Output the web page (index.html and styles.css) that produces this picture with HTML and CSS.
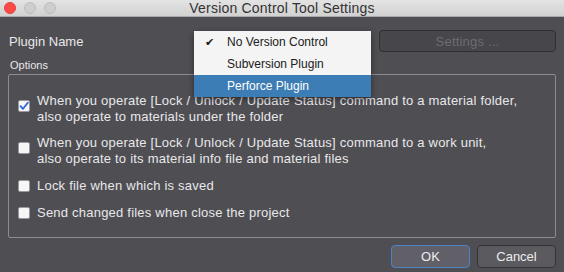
FILE: index.html
```html
<!DOCTYPE html>
<html lang="en">
<head>
    <meta charset="UTF-8">
    <title>Version Control Tool Settings</title>
    <link rel="stylesheet" href="styles.css">
</head>
<body>
    <div class="titlebar">
        <div class="lights">
            <span class="light close"></span>
            <span class="light"></span>
            <span class="light"></span>
        </div>
        <div class="title">Version Control Tool Settings</div>
    </div>
    <div class="main">
        <div class="plugin-row">
            <div class="plugin-label">Plugin Name</div>
            <button class="settings-btn" disabled>Settings ...</button>
        </div>
        <div class="options-label">Options</div>
        <div class="group">
            <div class="option multi">
                <span class="checkbox checked">
                    <svg width="10" height="10" viewBox="0 0 10 10"><path d="M1.5 5.2 L4 7.8 L8.8 1.8" fill="none" stroke="#2b62d8" stroke-width="1.8" stroke-linecap="round" stroke-linejoin="round"/></svg>
                </span>
                <div class="option-text">When you operate [Lock / Unlock / Update Status] command to a material folder,<br>also operate to materials under the folder</div>
            </div>
            <div class="option multi">
                <span class="checkbox"></span>
                <div class="option-text">When you operate [Lock / Unlock / Update Status] command to a work unit,<br>also operate to its material info file and material files</div>
            </div>
            <div class="option">
                <span class="checkbox"></span>
                <div class="option-text">Lock file when which is saved</div>
            </div>
            <div class="option">
                <span class="checkbox"></span>
                <div class="option-text">Send changed files when close the project</div>
            </div>
        </div>
        <div class="buttons">
            <button class="btn default">OK</button>
            <button class="btn">Cancel</button>
        </div>
    </div>
    <div class="menu">
        <div class="menu-item"><span class="tick">&#10004;</span>No Version Control</div>
        <div class="menu-item">Subversion Plugin</div>
        <div class="menu-item selected">Perforce Plugin</div>
    </div>
</body>
</html>
```

FILE: styles.css
```css
body {
    margin: 0;
    width: 564px;
    height: 272px;
    overflow: hidden;
    position: relative;
    background-color: #4f4e53;
    font-family: "Liberation Sans", Arial, sans-serif;
    font-size: 13px;
    color: #e8e8ea;
}
.titlebar {
    height: 16px;
    border-bottom: 1px solid #a9a8aa;
    background: linear-gradient(#e4e3e4, #d2d1d2);
    display: flex;
    align-items: center;
    position: relative;
}
.lights {
    display: flex;
    gap: 8px;
    padding-left: 4px;
    position: relative;
    z-index: 1;
}
.light {
    width: 12px;
    height: 12px;
    box-sizing: border-box;
    border-radius: 50%;
    background: #cfcecf;
    border: 1px solid #bdbcbd;
}
.light.close {
    background: #fc4a48;
    border-color: #e4403e;
}
.title {
    position: absolute;
    left: 0;
    right: 0;
    text-align: center;
    color: #333333;
    font-size: 14px;
    line-height: 16px;
    letter-spacing: 0.2px;
}
.main {
    padding: 13px 8px 0 8px;
}
.plugin-row {
    display: flex;
    align-items: center;
    height: 22px;
}
.plugin-label {
    padding-left: 1px;
}
.settings-btn {
    margin-left: auto;
    width: 177px;
    height: 22px;
    background: #47464a;
    border: 1px solid #2f2e32;
    border-radius: 4px;
    color: #6d6c71;
    font-family: inherit;
    font-size: 13px;
    letter-spacing: 0.2px;
}
.options-label {
    margin-top: 6px;
    padding-left: 2px;
    font-size: 11px;
    line-height: 14px;
}
.group {
    margin-top: 2px;
    height: 144px;
    border: 1px solid #8d8c90;
    border-radius: 2px;
    padding: 18px 0 0 9px;
}
.option {
    display: flex;
    align-items: flex-start;
    gap: 7px;
    line-height: 16px;
    margin-top: 11px;
    letter-spacing: 0.22px;
}
.option.multi + .option.multi {
    margin-top: 10px;
}
.option:first-child {
    margin-top: 0;
}
.checkbox {
    flex: none;
    width: 12px;
    height: 12px;
    margin-top: 2px;
    box-sizing: border-box;
    background: #f6f6f6;
    border: 1px solid #9a99a0;
    border-radius: 2px;
    display: flex;
    align-items: center;
    justify-content: center;
}
.option.multi .checkbox {
    margin-top: 7px;
}
.buttons {
    margin-top: 7px;
    display: flex;
    justify-content: flex-end;
    gap: 7px;
}
.btn {
    width: 79px;
    height: 23px;
    background: #5b5a5f;
    border: 1px solid #333236;
    border-radius: 4px;
    color: #ececee;
    font-family: inherit;
    font-size: 13px;
}
.btn.default {
    background: #616068;
    border-color: #4d82c8;
}
.menu {
    position: absolute;
    left: 194px;
    top: 31px;
    width: 177px;
    background: #f4f4f4;
    box-shadow: 0 2px 6px rgba(0, 0, 0, 0.45);
    color: #202020;
    font-size: 12px;
}
.menu-item {
    height: 22px;
    line-height: 22px;
    padding-left: 33px;
    position: relative;
}
.menu-item.selected {
    background: #3d7db5;
    color: #ffffff;
}
.tick {
    position: absolute;
    left: 11px;
    font-size: 11px;
}
```
